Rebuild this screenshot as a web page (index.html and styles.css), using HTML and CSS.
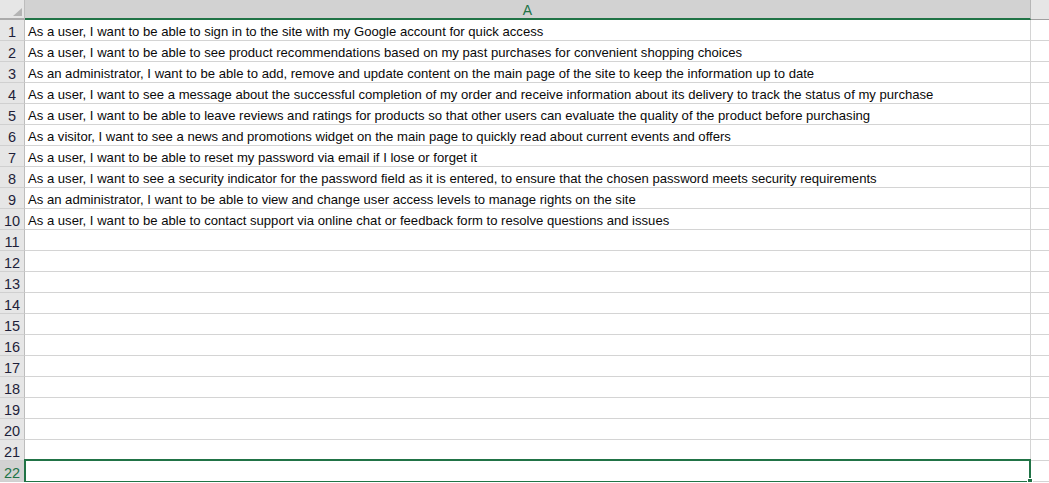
FILE: index.html
```html
<!DOCTYPE html>
<html>
<head>
<meta charset="utf-8">
<link rel="stylesheet" href="styles.css">
</head>
<body>
<div class="sheet">
  <div class="corner"><span class="tri"></span></div>
  <div class="colhead sel">A</div>
  <div class="colhead"></div>

  <div class="rowhead">1</div><div class="cell">As a user, I want to be able to sign in to the site with my Google account for quick access</div><div class="cell rest"></div>
  <div class="rowhead">2</div><div class="cell">As a user, I want to be able to see product recommendations based on my past purchases for convenient shopping choices</div><div class="cell rest"></div>
  <div class="rowhead">3</div><div class="cell">As an administrator, I want to be able to add, remove and update content on the main page of the site to keep the information up to date</div><div class="cell rest"></div>
  <div class="rowhead">4</div><div class="cell">As a user, I want to see a message about the successful completion of my order and receive information about its delivery to track the status of my purchase</div><div class="cell rest"></div>
  <div class="rowhead">5</div><div class="cell">As a user, I want to be able to leave reviews and ratings for products so that other users can evaluate the quality of the product before purchasing</div><div class="cell rest"></div>
  <div class="rowhead">6</div><div class="cell">As a visitor, I want to see a news and promotions widget on the main page to quickly read about current events and offers</div><div class="cell rest"></div>
  <div class="rowhead">7</div><div class="cell">As a user, I want to be able to reset my password via email if I lose or forget it</div><div class="cell rest"></div>
  <div class="rowhead">8</div><div class="cell">As a user, I want to see a security indicator for the password field as it is entered, to ensure that the chosen password meets security requirements</div><div class="cell rest"></div>
  <div class="rowhead">9</div><div class="cell">As an administrator, I want to be able to view and change user access levels to manage rights on the site</div><div class="cell rest"></div>
  <div class="rowhead">10</div><div class="cell">As a user, I want to be able to contact support via online chat or feedback form to resolve questions and issues</div><div class="cell rest"></div>
  <div class="rowhead">11</div><div class="cell"></div><div class="cell rest"></div>
  <div class="rowhead">12</div><div class="cell"></div><div class="cell rest"></div>
  <div class="rowhead">13</div><div class="cell"></div><div class="cell rest"></div>
  <div class="rowhead">14</div><div class="cell"></div><div class="cell rest"></div>
  <div class="rowhead">15</div><div class="cell"></div><div class="cell rest"></div>
  <div class="rowhead">16</div><div class="cell"></div><div class="cell rest"></div>
  <div class="rowhead">17</div><div class="cell"></div><div class="cell rest"></div>
  <div class="rowhead">18</div><div class="cell"></div><div class="cell rest"></div>
  <div class="rowhead">19</div><div class="cell"></div><div class="cell rest"></div>
  <div class="rowhead">20</div><div class="cell"></div><div class="cell rest"></div>
  <div class="rowhead">21</div><div class="cell"></div><div class="cell rest"></div>
  <div class="rowhead sel">22</div><div class="cell active"><span class="selbox"></span><span class="handle"></span></div><div class="cell rest"></div>
</div>
</body>
</html>
```

FILE: styles.css
```css
* { box-sizing: border-box; }
html, body { margin: 0; padding: 0; background: #ffffff; overflow: hidden; }
body {
  font-family: "Liberation Sans", Arial, sans-serif;
  font-size: 13.1px;
  color: #000;
}
.sheet {
  display: grid;
  grid-template-columns: 25px 1006px 1fr;
  grid-template-rows: 20px;
  grid-auto-rows: 21px;
  width: 1049px;
}
.corner {
  background: #e6e6e6;
  border-right: 1px solid #bdbdbd;
  border-bottom: 2px solid #ababab;
  position: relative;
}
.corner .tri {
  position: absolute;
  left: 13px;
  top: 8px;
  width: 9px;
  height: 8px;
  background: #b4b4b4;
  clip-path: polygon(100% 0, 100% 100%, 0 100%);
}
.colhead {
  background: #e6e6e6;
  border-bottom: 1px solid #a0a0a0;
  text-align: center;
  color: #444;
  line-height: 20px;
  font-size: 14px;
}
.colhead.sel {
  background: #d2d2d2;
  color: #217346;
  border-right: 1px solid #b6b6b6;
  border-bottom: 2px solid #217346;
  line-height: 21px;
}
.rowhead {
  background: #e6e6e6;
  border-right: 1px solid #bdbdbd;
  border-bottom: 1px solid #d0d0d0;
  text-align: center;
  color: #1f1f3a;
  line-height: 24px;
  font-size: 14.5px;
}
.rowhead.sel {
  background: #d2d2d2;
  color: #217346;
}
.cell {
  border-bottom: 1px solid #d4d4d4;
  border-right: 1px solid #d4d4d4;
  padding-left: 3px;
  line-height: 24px;
  white-space: nowrap;
  color: #0a0a0a;
}
.cell.rest { border-right: none; }
.cell.active { position: relative; }
.selbox {
  position: absolute;
  left: -1px;
  top: -2px;
  right: -1px;
  bottom: -2px;
  border: 2px solid #217346;
}
.handle {
  position: absolute;
  right: -3px;
  bottom: -3px;
  width: 6px;
  height: 6px;
  background: #217346;
  border: 1px solid #ffffff;
}
```
